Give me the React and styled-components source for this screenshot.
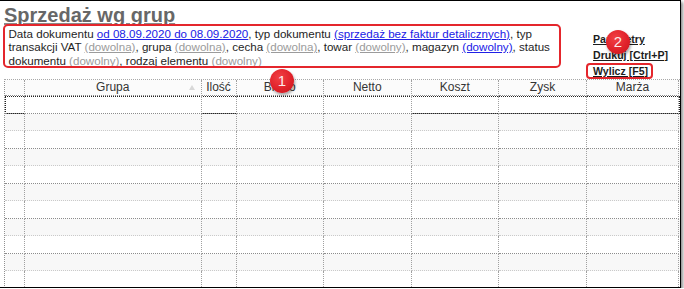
import React from "react";
import styled, { createGlobalStyle } from "styled-components";

const GlobalStyle = createGlobalStyle`
  html, body {
    margin: 0;
    padding: 0;
    background: #ffffff;
    font-family: "Liberation Sans", Arial, sans-serif;
  }
`;

const Frame = styled.div`
  position: relative;
  width: 680px;
  height: 286px;
  border-top: 1px solid #000;
  border-right: 1px solid #000;
  border-bottom: 1px solid #000;
  box-shadow: 2px 2px 3px rgba(0, 0, 0, 0.45);
  background: #fff;
  overflow: hidden;
`;

const Header = styled.div`
  display: flex;
  height: 78px;
`;

const Left = styled.div`
  width: 588px;
  padding-left: 4px;
  box-sizing: border-box;
`;

const Title = styled.div`
  margin-top: 5px;
  font-size: 20px;
  line-height: 19px;
  font-weight: bold;
  color: #676767;
  text-decoration: underline;
  text-decoration-color: #8a8a8a;
`;

const Filters = styled.div`
  position: relative;
  margin-top: 1.5px;
  margin-left: 4.5px;
  width: 548px;
  font-size: 11.6px;
  line-height: 13.5px;
  color: #1e1e1e;
  white-space: nowrap;

  &::before {
    content: "";
    position: absolute;
    left: -6px;
    right: -4px;
    top: -2.5px;
    bottom: -0.5px;
    border: 2px solid #e4262c;
    border-radius: 5px;
  }
`;

const Value = styled.span`
  color: ${(p) => (p.$muted ? "#9b9b9b" : "#2020e6")};
  text-decoration: underline;
`;

const Actions = styled.div`
  display: flex;
  flex-direction: column;
  align-items: flex-start;
  padding-top: 30px;
  padding-left: 5px;
`;

const Action = styled.span`
  position: relative;
  display: inline-block;
  font-size: 10.6px;
  line-height: 16px;
  font-weight: bold;
  color: #1c1c1c;
  text-decoration: underline;

  ${(p) =>
    p.$marked &&
    `
    &::after {
      content: "";
      position: absolute;
      left: -7px;
      right: -5px;
      top: 0;
      bottom: 0;
      border: 2px solid #e4262c;
      border-radius: 4px;
    }
  `}
`;

const Badge = styled.div`
  position: absolute;
  left: ${(p) => p.$x}px;
  top: ${(p) => p.$y}px;
  width: 24px;
  height: 24px;
  border-radius: 50%;
  background: radial-gradient(circle at 40% 35%, #f24045 0%, #e0222a 55%, #c5161d 100%);
  box-shadow: 1px 2px 3px rgba(0, 0, 0, 0.35);
  color: rgba(255, 255, 255, 0.92);
  font-size: 15px;
  line-height: 24px;
  text-align: center;
`;

const COLS = "20px 176.5px 35px 87.5px 87.5px 87.5px 88px 92px";

const Table = styled.div`
  margin-left: 4px;
  border-top: 1px dotted #a8a8a8;
  border-left: 1px dotted #909090;
`;

const Row = styled.div`
  display: grid;
  grid-template-columns: ${COLS};
  height: ${(p) => (p.$head ? "16px" : "17.5px")};
  background: ${(p) => (p.$head ? "#fbfbfb" : p.$striped ? "#f8f8f8" : "#fff")};
  outline: ${(p) => (p.$focused ? "1px dotted #222" : "none")};
  outline-offset: -1px;
`;

const Cell = styled.div`
  position: relative;
  border-right: 1px dotted #a0a0a0;
  border-bottom: 1px dotted ${(p) => (p.$light ? "#cacaca" : "#8c8c8c")};
  font-size: 12px;
  line-height: 15px;
  color: #343434;
  text-align: center;
  overflow: hidden;
  white-space: nowrap;

  ${(p) =>
    p.$sorted &&
    `
    &::after {
      content: "";
      position: absolute;
      right: 6px;
      top: 5px;
      border-left: 3.5px solid transparent;
      border-right: 3.5px solid transparent;
      border-bottom: 5px solid #d8d8d8;
    }
  `}
`;

const columns = ["", "Grupa", "Ilość", "Brutto", "Netto", "Koszt", "Zysk", "Marża"];

export default function App() {
  const rows = Array.from({ length: 12 }, (_, i) => i);
  return (
    <>
      <GlobalStyle />
      <Frame>
        <Header>
          <Left>
            <Title>Sprzedaż wg grup</Title>
            <Filters>
              Data dokumentu <Value>od 08.09.2020 do 08.09.2020</Value>, typ dokumentu{" "}
              <Value>(sprzedaż bez faktur detalicznych)</Value>, typ
              <br />
              transakcji VAT <Value $muted>(dowolna)</Value>, grupa <Value $muted>(dowolna)</Value>, cecha{" "}
              <Value $muted>(dowolna)</Value>, towar <Value $muted>(dowolny)</Value>, magazyn{" "}
              <Value>(dowolny)</Value>, status
              <br />
              dokumentu <Value $muted>(dowolny)</Value>, rodzaj elementu <Value $muted>(dowolny)</Value>
            </Filters>
          </Left>
          <Actions>
            <Action>Parametry</Action>
            <Action>Drukuj [Ctrl+P]</Action>
            <Action $marked>Wylicz [F5]</Action>
          </Actions>
        </Header>
        <Table>
          <Row $head>
            {columns.map((c, i) => (
              <Cell key={i} $sorted={c === "Grupa"}>
                {c}
              </Cell>
            ))}
          </Row>
          {rows.map((r) => (
            <Row key={r} $striped={r % 2 === 1} $focused={r === 0}>
              {columns.map((_, i) => (
                <Cell key={i} $light={r % 2 === 1} />
              ))}
            </Row>
          ))}
        </Table>
        <Badge $x={270} $y={68}>1</Badge>
        <Badge $x={606} $y={29}>2</Badge>
      </Frame>
    </>
  );
}
